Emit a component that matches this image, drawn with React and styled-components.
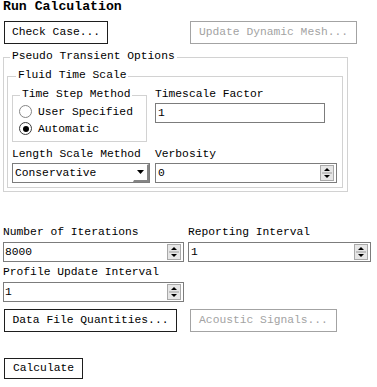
import React from "react";
import styled, { createGlobalStyle } from "styled-components";

const Global = createGlobalStyle`
  html, body { margin: 0; padding: 0; background: #fff; }
  body {
    font-family: "Liberation Mono", "Courier New", monospace;
    font-size: 11.3px;
    color: #000;
  }
  * { box-sizing: border-box; }
`;

const Page = styled.div`
  width: 377px;
  height: 387px;
  overflow: hidden;
`;

const Title = styled.h1`
  margin: 0 0 0 3px;
  font-family: inherit;
  font-size: 13.2px;
  font-weight: bold;
  line-height: 14px;
`;

const ButtonRow = styled.div`
  display: grid;
  grid-template-columns: 186px auto;
  justify-content: start;
  align-items: start;
  padding-left: 4px;
  margin-top: ${(p) => p.$mt}px;
`;

const Button = styled.button`
  font-family: inherit;
  font-size: 11.3px;
  line-height: 13px;
  width: ${(p) => p.$w}px;
  height: ${(p) => p.$h || 23}px;
  padding: 0;
  text-align: center;
  white-space: nowrap;
  background: #fff;
  color: ${(p) => (p.disabled ? "#a3a3a3" : "#000")};
  border: 1px solid ${(p) => (p.disabled ? "#a3a3a3" : "#1e1e1e")};
  border-radius: 0;
`;

const Group = styled.fieldset`
  margin: ${(p) => p.$margin || "0"};
  padding: ${(p) => p.$pad};
  width: ${(p) => p.$w}px;
  min-width: 0;
  border: 1px solid #d2d2d2;
`;

const Legend = styled.legend`
  padding: 0 2px 2px;
  margin-left: ${(p) => p.$ml}px;
  line-height: 12px;
  font-size: 11.3px;
  white-space: nowrap;
`;

const FluidGrid = styled.div`
  display: grid;
  grid-template-columns: 143px auto;
  row-gap: 6px;
  align-items: start;
`;

const Column = styled.div`
  display: flex;
  flex-direction: column;
  align-items: flex-start;
`;

const Label = styled.div`
  line-height: 12px;
  white-space: nowrap;
  margin-bottom: ${(p) => p.$mb ?? 3}px;
`;

const RadioRow = styled.label`
  display: flex;
  align-items: center;
  height: 17px;
  line-height: 12px;
  white-space: nowrap;
`;

const RadioDot = styled.span`
  width: 13px;
  height: 13px;
  border-radius: 50%;
  border: 1px solid ${(p) => (p.$on ? "#3c3c3c" : "#858585")};
  background: #fff;
  margin-right: 6px;
  display: grid;
  place-items: center;
  &::after {
    content: "";
    width: 6px;
    height: 6px;
    border-radius: 50%;
    background: ${(p) => (p.$on ? "#000" : "transparent")};
  }
`;

const TextField = styled.div`
  width: ${(p) => p.$w}px;
  height: 20px;
  border: 1px solid #7c7c7c;
  background: #fff;
  display: flex;
  align-items: center;
  padding: 0 2px 0 ${(p) => p.$pl ?? 2}px;
`;

const FieldText = styled.span`
  flex: 1;
  line-height: 12px;
  white-space: nowrap;
`;

const ArrowBox = styled.span`
  width: 14px;
  height: 16px;
  border: 1px solid #a9a9a9;
  background: #e6e6e6;
  display: block;
  flex: none;
`;

const ComboButton = styled.span`
  width: 16px;
  height: 18px;
  margin-right: -2px;
  border-top: 1px solid #fff;
  border-left: 1px solid #fff;
  border-right: 2px solid #858585;
  border-bottom: 2px solid #858585;
  display: grid;
  place-items: center;
  flex: none;
`;

const BottomGrid = styled.div`
  display: grid;
  grid-template-columns: 181px 183px;
  column-gap: 4px;
  row-gap: 4px;
  padding-left: 3px;
  margin-top: 34px;
`;

function SpinArrows() {
  return (
    <ArrowBox>
      <svg width="12" height="14" viewBox="0 0 12 14">
        <polygon points="3,5 9,5 6,2" fill="#000" />
        <line x1="1" y1="7" x2="11" y2="7" stroke="#9a9a9a" strokeWidth="1" />
        <polygon points="3,9 9,9 6,12" fill="#000" />
      </svg>
    </ArrowBox>
  );
}

function Spinner({ w, value, pl }) {
  return (
    <TextField $w={w} $pl={pl}>
      <FieldText>{value}</FieldText>
      <SpinArrows />
    </TextField>
  );
}

function Radio({ on, children }) {
  return (
    <RadioRow>
      <RadioDot $on={on} />
      {children}
    </RadioRow>
  );
}

export default function App() {
  return (
    <Page>
      <Global />
      <Title>Run Calculation</Title>
      <ButtonRow $mt={7}>
        <Button $w={104}>Check Case...</Button>
        <Button $w={167} disabled>
          Update Dynamic Mesh...
        </Button>
      </ButtonRow>

      <Group $margin="6px 0 0 3px" $pad="5px 4px 3px 3px" $w={345}>
        <Legend $ml={3}>Pseudo Transient Options</Legend>
        <Group $pad="5px 4px 4px 4px" $w={336}>
          <Legend $ml={4}>Fluid Time Scale</Legend>
          <FluidGrid>
            <Group $pad="1px 4px 4px 6px" $w={135}>
              <Legend $ml={1}>Time Step Method</Legend>
              <Radio on={false}>User Specified</Radio>
              <Radio on={true}>Automatic</Radio>
            </Group>
            <Column>
              <Label>Timescale Factor</Label>
              <TextField $w={170}>
                <FieldText>1</FieldText>
              </TextField>
            </Column>
            <Column>
              <Label>Length Scale Method</Label>
              <TextField $w={138}>
                <FieldText>Conservative</FieldText>
                <ComboButton>
                  <svg width="8" height="5" viewBox="0 0 8 5">
                    <polygon points="0,0 7,0 3.5,4" fill="#000" />
                  </svg>
                </ComboButton>
              </TextField>
            </Column>
            <Column>
              <Label>Verbosity</Label>
              <Spinner w={182} value="0" />
            </Column>
          </FluidGrid>
        </Group>
      </Group>

      <BottomGrid>
        <Column>
          <Label $mb={4}>Number of Iterations</Label>
          <Spinner w={181} value="8000" pl={1} />
        </Column>
        <Column>
          <Label $mb={4}>Reporting Interval</Label>
          <Spinner w={183} value="1" />
        </Column>
        <Column>
          <Label $mb={4}>Profile Update Interval</Label>
          <Spinner w={181} value="1" pl={1} />
        </Column>
      </BottomGrid>

      <ButtonRow $mt={7}>
        <Button $w={173}>Data File Quantities...</Button>
        <Button $w={147} disabled>
          Acoustic Signals...
        </Button>
      </ButtonRow>

      <ButtonRow $mt={26}>
        <Button $w={79} $h={21}>
          Calculate
        </Button>
      </ButtonRow>
    </Page>
  );
}
